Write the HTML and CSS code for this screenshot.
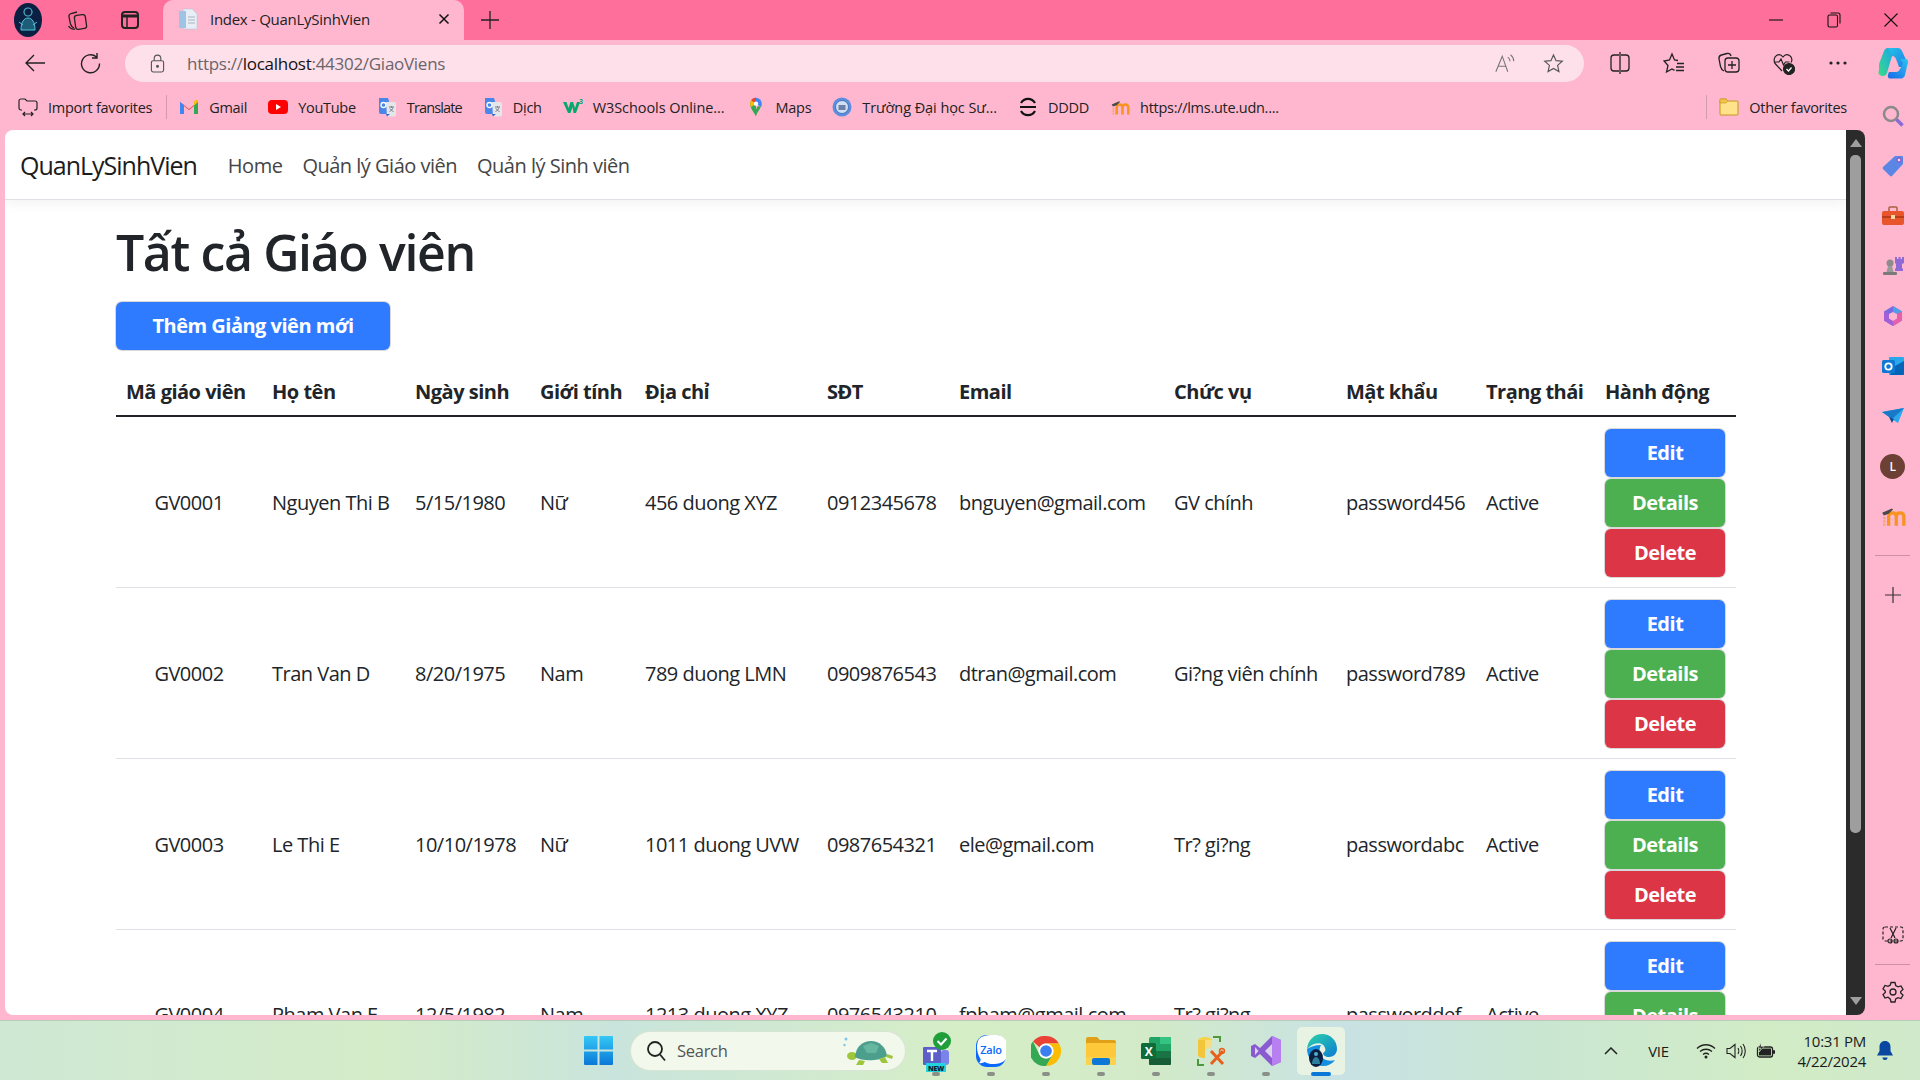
FILE: index.html
```html
<!DOCTYPE html>
<html lang="vi">
<head>
    <meta charset="utf-8">
    <title>Index - QuanLySinhVien</title>
    <link rel="stylesheet" href="styles.css">
</head>
<body>

<svg class="defs" width="0" height="0">
    <symbol id="gtranslate" viewBox="0 0 20 20">
        <path d="M2 1h9l5 16H4a2 2 0 0 1-2-2z" fill="#4a86e8"/>
        <path d="M9 5h8a2 2 0 0 1 2 2v11a1.500 1.500 0 0 1-1.500 1.500H10z" fill="#e4e6ea"/>
        <path d="M9 17l1 2.500 3-2.500z" fill="#3367c8"/>
        <circle cx="6.500" cy="8" r="2.500" fill="none" stroke="#fff" stroke-width="1.300"/>
        <path d="M12 10h5M14.500 9v1.500M16 10.500c-.6 2-1.800 3.200-3.500 4M13 11.500c.6 1.300 1.800 2.400 3.500 3" fill="none" stroke="#6d7380" stroke-width=".9"/>
    </symbol>
    <symbol id="moodle" viewBox="0 0 24 20">
        <path d="M8 19v-8c0-2.500 1.500-4 3.500-4s3.500 1.500 3.500 4v8M15 11c0-2.500 1.500-4 3.500-4S22 8.500 22 11v8" fill="none" stroke="#f7931e" stroke-width="3"/>
        <path d="M4 11V19" fill="none" stroke="#f7931e" stroke-width="2" stroke-dasharray="2 1" opacity=".6"/>
        <path d="M2 7l9-4 1 1-4 4-4.500 1.500z" fill="#4a4a4a"/>
    </symbol>
</svg>

<div class="tabstrip">
    <svg class="avatar" viewBox="0 0 28 34">
        <ellipse cx="14" cy="17" rx="14" ry="17" fill="#0b1f42"/>
        <circle cx="14" cy="9" r="4" fill="none" stroke="#4fb3c8" stroke-width="1.200"/>
        <path d="M7 27c0-8 3-12 7-12s7 4 7 12zM5 19l4 3M23 19l-4 3" fill="#1d5d78" stroke="#54c3d8" stroke-width="1"/>
    </svg>
    <svg class="strip-btn collect" viewBox="0 0 22 22" fill="none" stroke="#222" stroke-width="1.300">
        <rect x="9" y="6" width="11" height="14" rx="2.500" transform="rotate(-8 14 13)"/>
        <path d="M8 19c-2-1-3-2-3.500-4L3 8c-.3-2 .5-3 2-3.500L11 3"/>
        <path d="M9 20c-3 .5-5-.5-6.500-3"/>
    </svg>
    <svg class="strip-btn vtabs" viewBox="0 0 22 22" fill="none" stroke="#222" stroke-width="2">
        <rect x="3" y="3" width="16" height="16" rx="3"/>
        <path d="M3 7h16" stroke-width="3"/>
        <path d="M8 7v12" stroke-width="1.500"/>
    </svg>
    <div class="tab">
        <svg class="favicon" viewBox="0 0 20 22">
            <path d="M5 1h9l5 5v15H5z" fill="#e8eef5" stroke="#b9c8d8" stroke-width=".6"/>
            <rect x="1" y="3" width="7" height="17" fill="#9dc4e4"/>
            <path d="M10 9h7M10 12h7M10 15h7" stroke="#a9b4c0" stroke-width="1"/>
        </svg>
        <span class="tab-title">Index - QuanLySinhVien</span>
        <svg class="tab-close" viewBox="0 0 12 12" fill="none" stroke="#111" stroke-width="1.500"><path d="M1.500 1.500l9 9M10.500 1.500l-9 9"/></svg>
    </div>
    <svg class="new-tab" viewBox="0 0 20 20" fill="none" stroke="#222" stroke-width="1.300"><path d="M10 1v18M1 10h18"/></svg>
    <div class="win-controls">
        <div class="win-btn"><svg width="14" height="14" viewBox="0 0 14 14" stroke="#111" stroke-width="1.100"><path d="M0 7h14"/></svg></div>
        <div class="win-btn"><svg width="14" height="16" viewBox="0 0 14 16" fill="none" stroke="#111" stroke-width="1.100"><rect x="1" y="3" width="9.500" height="12" rx="1.500"/><path d="M3.500 1h7.500a2 2 0 0 1 2 2v8.500"/></svg></div>
        <div class="win-btn"><svg width="14" height="14" viewBox="0 0 14 14" stroke="#111" stroke-width="1.100"><path d="M.5.500l13 13M13.500.500l-13 13"/></svg></div>
    </div>
</div>

<div class="toolbar">
    <svg class="nav-btn" viewBox="0 0 22 22" fill="none" stroke="#222" stroke-width="1.400"><path d="M21 11H2M10 3l-8 8 8 8"/></svg>
    <svg class="nav-btn refresh" viewBox="0 0 22 22" fill="none" stroke="#222" stroke-width="1.400"><path d="M17.500 5a9 9 0 1 0 3 6.500M18 1v5h-5"/></svg>
    <div class="addressbar">
        <svg class="lock" viewBox="0 0 16 20" fill="none" stroke="#555" stroke-width="1.200"><rect x="1.500" y="7" width="13" height="12" rx="2"/><path d="M4.500 7V4.500a3.500 3.500 0 0 1 7 0V7"/><circle cx="8" cy="13" r="1" fill="#555"/></svg>
        <span class="url">https://<b class="url-host">localhost</b>:44302/GiaoViens</span>
        <svg class="read-aloud" viewBox="0 0 24 22" fill="none" stroke="#777" stroke-width="1.200"><path d="M2 20L9 3l6 17M5 14h8M15 4c1.500 1 2.500 2.500 2.500 4.500M18 1.500c2 1.500 3.500 4 3.500 7"/></svg>
        <svg class="star" viewBox="0 0 22 22" fill="none" stroke="#555" stroke-width="1.200"><path d="M11 2l2.700 6 6.500.7-4.900 4.300 1.400 6.500L11 16.200l-5.700 3.300 1.400-6.500L1.800 8.700 8.300 8z"/></svg>
    </div>
    <div class="tool-right">
        <div class="tool-btn"><svg width="20" height="22" viewBox="0 0 20 22" fill="none" stroke="#222" stroke-width="1.300"><path d="M9 3H4a3 3 0 0 0-3 3v10a3 3 0 0 0 3 3h5M11 3h5a3 3 0 0 1 3 3v10a3 3 0 0 1-3 3h-5M10 0v22"/></svg></div>
        <div class="tool-btn"><svg width="22" height="22" viewBox="0 0 22 22" fill="none" stroke="#222" stroke-width="1.300"><path d="M15 8.500L11.500 8 9 2 6.500 8 1 9l4 4.500L3.500 20 9 17l2.500 1.300"/><path d="M14 11.500h7M13 15h8M13 18.500h8" stroke-width="1.500"/></svg></div>
        <div class="tool-btn"><svg width="22" height="24" viewBox="0 0 22 24" fill="none" stroke="#222" stroke-width="1.300"><rect x="7" y="7" width="14" height="14" rx="3"/><path d="M14 10v8M10 14h8"/><path d="M6 20c-2-1-3-2.500-3.500-4.500L1 8c-.3-2 .6-3.500 2.500-4L9 2.500c2-.4 3.500.4 4 2.500"/></svg></div>
        <div class="tool-btn"><svg width="22" height="24" viewBox="0 0 22 24" fill="none" stroke="#222" stroke-width="1.200"><path d="M9 20L2.500 13C.5 11 .5 6.500 3.500 4.500c2.500-1.500 5-.5 6.500 1.500 1.500-2 4-3 6.500-1.500 2.500 1.500 3 5 1.500 7"/><path d="M1.500 11H6l2-3 2.500 6 2-3h4"/><circle cx="16" cy="18" r="5.500" fill="#222"/><path d="M13.500 18l2 2 3-3.500" stroke="#fff"/></svg></div>
        <div class="tool-btn"><svg width="18" height="4" viewBox="0 0 18 4" fill="#222"><circle cx="2" cy="2" r="1.600"/><circle cx="9" cy="2" r="1.600"/><circle cx="16" cy="2" r="1.600"/></svg></div>
        <div class="tool-btn"><svg width="30" height="32" viewBox="0 0 30 32"><defs><linearGradient id="cpA" x1="0" y1="0" x2="1" y2="1"><stop offset="0" stop-color="#26c2e8"/><stop offset="1" stop-color="#1f7fe8"/></linearGradient><linearGradient id="cpB" x1="0" y1="1" x2="1" y2="0"><stop offset="0" stop-color="#3ddc84"/><stop offset="1" stop-color="#17a8e8"/></linearGradient><linearGradient id="cpC" x1="0" y1="1" x2="1" y2="0"><stop offset="0" stop-color="#1a6ae8"/><stop offset="1" stop-color="#2cc4f0"/></linearGradient></defs><path d="M9 1h11c2 0 3 1 4 3l5 11c1 2-.5 5-3 5h-5l-3-8c-1-2-2-3-4-3H9z" fill="url(#cpA)"/><path d="M1 17L6 4c.7-2 2-3 4-3L14 9 9 26c-.5 2-2 3-4 3H4c-3 0-4.500-3-3-6z" fill="url(#cpB)"/><path d="M22 12h6c1.500 0 2 1 2 3l-3 13c-.5 2-2 3.500-4 3.500H12c-2 0-2.500-2-2-4l1-2.500h7c2 0 3-1 4-3l3-6z" fill="url(#cpC)"/></svg></div>
    </div>
</div>

<div class="below">
    <div class="left-col">
        <div class="bookmarks">
            <div class="bm">
                <svg class="bm-ico" viewBox="0 0 20 20" fill="none" stroke="#222" stroke-width="1.200"><path d="M4 13H3a2 2 0 0 1-2-2V4a2 2 0 0 1 2-2h4l2 2h8a2 2 0 0 1 2 2v5a2 2 0 0 1-2 2h-1"/><path d="M5 17h10M7 15l-2 2 2 2M13 15l2 2-2 2"/></svg>
                <span>Import favorites</span>
            </div>
            <i class="bm-sep"></i>
            <div class="bm">
                <svg class="bm-ico" viewBox="0 0 20 16"><path d="M1 15V3l9 7 9-7v12h-4V7l-5 4-5-4v8z" fill="#ea4335"/><path d="M1 15V3l4 3v9z" fill="#4285f4"/><path d="M15 6l4-3v12h-4z" fill="#34a853"/><path d="M15 6.500l4-3.500v-1c0-1-1-1.500-2-1l-2 1.500z" fill="#fbbc04"/></svg>
                <span>Gmail</span>
            </div>
            <div class="bm">
                <svg class="bm-ico" viewBox="0 0 20 16"><rect x="0" y="1" width="20" height="14" rx="4" fill="#f00"/><path d="M8 5l5 3-5 3z" fill="#fff"/></svg>
                <span>YouTube</span>
            </div>
            <div class="bm">
                <svg class="bm-ico"><use href="#gtranslate"/></svg>
                <span class="bm-tight">Translate</span>
            </div>
            <div class="bm">
                <svg class="bm-ico"><use href="#gtranslate"/></svg>
                <span>Dịch</span>
            </div>
            <div class="bm">
                <svg class="bm-ico" viewBox="0 0 20 16"><path d="M0 3h3.500l2 6 2-6h2.500l2 6 2-6h3l-4 11h-2.500L9.500 8l-2 6H5z" fill="#04aa6d"/><text class="bm-w3" x="16" y="5">3</text></svg>
                <span class="bm-wide">W3Schools Online...</span>
            </div>
            <div class="bm">
                <svg class="bm-ico" viewBox="0 0 20 24"><path d="M10 23C7 17 3 14 3 8a7 7 0 0 1 7-7z" fill="#34a853"/><path d="M10 1a7 7 0 0 1 7 7c0 1.500-.5 3-1.200 4L10 8z" fill="#4285f4"/><path d="M4 4a7 7 0 0 1 6-3v7z" fill="#ea4335"/><path d="M3 8c0-1.500.4-3 1-4l6 4-6 4c-.6-1.200-1-2.500-1-4z" fill="#fbbc04"/><path d="M16 11.500C14 16 11.500 18 10 23l-1-6 3-6z" fill="#34a853"/><circle cx="10" cy="8" r="2.600" fill="#fff"/></svg>
                <span>Maps</span>
            </div>
            <div class="bm">
                <svg class="bm-ico" viewBox="0 0 20 20"><circle cx="10" cy="10" r="9.500" fill="#5b8ede"/><circle cx="10" cy="10" r="6.500" fill="#cfe0f5" stroke="#3a62b0" stroke-width=".8"/><path d="M6.500 8h7v5h-7z" fill="#6e7fa8"/></svg>
                <span class="bm-wide">Trường Đại học Sư...</span>
            </div>
            <div class="bm">
                <svg class="bm-ico" viewBox="0 0 20 20" fill="none" stroke="#111" stroke-width="2.200"><path d="M2 10h16M3 6a8 8 0 0 1 14 0M3 14a8 8 0 0 0 14 0"/></svg>
                <span>DDDD</span>
            </div>
            <div class="bm">
                <svg class="bm-ico"><use href="#moodle"/></svg>
                <span>https://lms.ute.udn....</span>
            </div>
            <i class="bm-sep bm-sep-right"></i>
            <div class="bm bm-other">
                <svg class="bm-ico" viewBox="0 0 20 20"><path d="M1 3a1 1 0 0 1 1-1h5l2 2h9a1 1 0 0 1 1 1v12a1 1 0 0 1-1 1H2a1 1 0 0 1-1-1z" fill="#ffe28a" stroke="#c6961a"/><path d="M1 6V3a1 1 0 0 1 1-1h5l2 2-2 2z" fill="#f3c44a" stroke="#c6961a" stroke-width=".6"/></svg>
                <span>Other favorites</span>
            </div>
        </div>

        <div class="viewport">
            <div class="page">
                <nav class="navbar">
                    <a class="brand">QuanLySinhVien</a>
                    <a class="nav-link">Home</a>
                    <a class="nav-link">Quản lý Giáo viên</a>
                    <a class="nav-link">Quản lý Sinh viên</a>
                </nav>
                <main class="container">
                    <h1 class="title">Tất cả Giáo viên</h1>
                    <a class="btn btn-primary btn-add">Thêm Giảng viên mới</a>
                    <table class="table">
                        <colgroup>
                            <col class="c-ma"><col class="c-ten"><col class="c-ngay"><col class="c-gt"><col class="c-dc"><col class="c-sdt"><col class="c-mail"><col class="c-cv"><col class="c-mk"><col class="c-tt"><col class="c-hd">
                        </colgroup>
                        <thead>
                            <tr>
                                <th>Mã giáo viên</th><th>Họ tên</th><th>Ngày sinh</th><th>Giới tính</th><th>Địa chỉ</th><th>SĐT</th><th>Email</th><th>Chức vụ</th><th>Mật khẩu</th><th>Trạng thái</th><th>Hành động</th>
                            </tr>
                        </thead>
                        <tbody>
                            <tr>
                                <td class="center">GV0001</td><td>Nguyen Thi B</td><td>5/15/1980</td><td>Nữ</td><td>456 duong XYZ</td><td>0912345678</td><td>bnguyen@gmail.com</td><td>GV chính</td><td>password456</td><td>Active</td>
                                <td class="actions"><a class="btn btn-primary">Edit</a><a class="btn btn-success">Details</a><a class="btn btn-danger">Delete</a></td>
                            </tr>
                            <tr>
                                <td class="center">GV0002</td><td>Tran Van D</td><td>8/20/1975</td><td>Nam</td><td>789 duong LMN</td><td>0909876543</td><td>dtran@gmail.com</td><td>Gi?ng viên chính</td><td>password789</td><td>Active</td>
                                <td class="actions"><a class="btn btn-primary">Edit</a><a class="btn btn-success">Details</a><a class="btn btn-danger">Delete</a></td>
                            </tr>
                            <tr>
                                <td class="center">GV0003</td><td>Le Thi E</td><td>10/10/1978</td><td>Nữ</td><td>1011 duong UVW</td><td>0987654321</td><td>ele@gmail.com</td><td>Tr? gi?ng</td><td>passwordabc</td><td>Active</td>
                                <td class="actions"><a class="btn btn-primary">Edit</a><a class="btn btn-success">Details</a><a class="btn btn-danger">Delete</a></td>
                            </tr>
                            <tr>
                                <td class="center">GV0004</td><td>Pham Van F</td><td>12/5/1982</td><td>Nam</td><td>1213 duong XYZ</td><td>0976543210</td><td>fpham@gmail.com</td><td>Tr? gi?ng</td><td>passworddef</td><td>Active</td>
                                <td class="actions"><a class="btn btn-primary">Edit</a><a class="btn btn-success">Details</a></td>
                            </tr>
                        </tbody>
                    </table>
                </main>
            </div>
            <div class="scrollbar">
                <i class="arrow-up"></i>
                <div class="thumb"></div>
                <i class="arrow-down"></i>
            </div>
        </div>
    </div>

    <aside class="sidebar">
        <div class="side-btn"><svg width="24" height="24" viewBox="0 0 24 24" fill="none"><circle cx="10" cy="10" r="7" stroke="#8a8a8a" stroke-width="2.500"/><path d="M15.500 15.500l6 6" stroke="#8a6ad8" stroke-width="3.500"/></svg></div>
        <div class="side-btn"><svg width="24" height="24" viewBox="0 0 24 24"><path d="M14 2h7a1 1 0 0 1 1 1v7L11 22a1.500 1.500 0 0 1-2 0l-7-7a1.500 1.500 0 0 1 0-2z" fill="#5b86e5"/><circle cx="18" cy="6" r="2" fill="#f2d9f0" stroke="#8e3fc0"/></svg></div>
        <div class="side-btn"><svg width="24" height="24" viewBox="0 0 24 24"><path d="M8 7V4a1 1 0 0 1 1-1h6a1 1 0 0 1 1 1v3" fill="none" stroke="#a9623f" stroke-width="1.500"/><rect x="1" y="7" width="22" height="14" rx="2" fill="#e8552a"/><rect x="1" y="12" width="22" height="2" fill="#b83c18"/><rect x="10" y="11" width="4" height="4" fill="#f7d9a8"/></svg></div>
        <div class="side-btn"><svg width="24" height="24" viewBox="0 0 24 24"><circle cx="9" cy="9" r="3.500" fill="#8c8c8c"/><path d="M7 12h4l1.500 6h-7z" fill="#9a9a9a"/><rect x="2" y="18" width="14" height="3" rx="1" fill="#7a7a7a"/><path d="M14 3h2v2h1.500V3h2v2H21V3h2v6l-2 1v4l1 1v2h-8v-2l1-1v-4l-1-1z" fill="#8f6ad6"/></svg></div>
        <div class="side-btn"><svg width="24" height="24" viewBox="0 0 24 24"><path d="M12 2l9 5.500v9L12 22l-9-5.500v-9z" fill="#7a6ae0"/><path d="M12 2l9 5.500L16 10l-4-2z" fill="#4f9fe8"/><path d="M21 16.500L12 22v-5l4-2.500V10l5-2.500z" fill="#e85ea8"/><path d="M3 7.500L8 10v4l4 3v5l-9-5.500z" fill="#a45fd8"/><path d="M8 10l4-2 4 2v4.500L12 17l-4-2.500z" fill="#ffb7cf"/></svg></div>
        <div class="side-btn"><svg width="24" height="24" viewBox="0 0 24 24"><rect x="8" y="3" width="15" height="18" rx="1" fill="#28a8ea"/><path d="M14 12l9-5v13a1 1 0 0 1-1 1H9z" fill="#0364b8"/><rect x="1" y="6" width="13" height="13" rx="1.500" fill="#0f78d4"/><circle cx="7.500" cy="12.500" r="3.200" fill="none" stroke="#fff" stroke-width="1.800"/></svg></div>
        <div class="side-btn"><svg width="24" height="24" viewBox="0 0 24 24"><path d="M1 8l22-4-6 15-6-4z" fill="#2aa8ee"/><path d="M1 8l10 7 12-11z" fill="#1879c9"/><path d="M8 13l3 6 2-4z" fill="#0f4c8a"/></svg></div>
        <div class="side-btn"><span class="side-avatar">L</span></div>
        <div class="side-btn"><svg width="26" height="22"><use href="#moodle"/></svg></div>
        <i class="side-sep"></i>
        <div class="side-btn side-plus"><svg width="16" height="16" viewBox="0 0 16 16" stroke="#333" stroke-width="1.200"><path d="M8 0v16M0 8h16"/></svg></div>
        <div class="side-spacer"></div>
        <div class="side-btn side-low"><svg width="22" height="22" viewBox="0 0 22 22" fill="none" stroke="#222" stroke-width="1.200"><rect x="1" y="3" width="20" height="14" rx="2" stroke-dasharray="3 2"/><path d="M8 4l5 10M14 4L9 14"/><circle cx="8" cy="17" r="2"/><circle cx="14" cy="17" r="2"/></svg></div>
        <i class="side-sep side-sep-low"></i>
        <div class="side-btn side-gear"><svg width="22" height="22" viewBox="0 0 22 22" fill="none" stroke="#222" stroke-width="1.300"><path d="M9 1.500h4l.7 3 2.300 1.300 3-.9 2 3.500-2.300 2.100v1.500l2.300 2.100-2 3.500-3-.9-2.300 1.300-.7 3H9l-.7-3L6 16.200l-3 .9-2-3.500 2.300-2.100V10L1 7.900l2-3.500 3 .9 2.300-1.300z"/><circle cx="11" cy="11" r="3"/></svg></div>
    </aside>
</div>

<footer class="taskbar">
    <svg class="start" viewBox="0 0 29 29">
        <defs><linearGradient id="winG" x1="0" y1="0" x2="0" y2="1"><stop offset="0" stop-color="#35c8f6"/><stop offset="1" stop-color="#0a78d8"/></linearGradient></defs>
        <path d="M0 1a1 1 0 0 1 1-1h12.500v13.500H0zM15.500 0H28a1 1 0 0 1 1 1v12.500H15.500zM0 15.500h13.500V29H1a1 1 0 0 1-1-1zM15.500 15.500H29V28a1 1 0 0 1-1 1H15.500z" fill="url(#winG)"/>
    </svg>
    <div class="searchbox">
        <svg class="search-ico" viewBox="0 0 20 22" fill="none" stroke="#222" stroke-width="1.800"><circle cx="9" cy="9" r="7"/><path d="M14 14.500l5 6"/></svg>
        <span class="search-text">Search</span>
        <svg class="turtle" viewBox="0 0 52 30">
            <circle cx="3" cy="3" r="1.500" fill="#7cc6e8"/><circle cx="1.500" cy="9" r="1.200" fill="#7cc6e8"/>
            <ellipse cx="9" cy="20" rx="5" ry="4" fill="#9dc63c"/>
            <path d="M12 21c1-11 8-16 16-16s15 6 16 15c-8 5-24 6-32 1z" fill="#4d9f8d"/>
            <path d="M20 10l8-3 8 3-3 7H24z" fill="#66b7a0"/>
            <path d="M16 24l-3 5h7l2-4zM36 23l3 4h6l-3-6zM44 18l6 2-1 3-6-2z" fill="#9dc63c"/>
        </svg>
    </div>
    <div class="task-apps">
        <div class="app">
            <svg width="34" height="42" viewBox="-3 0 34 42"><rect x="1" y="17" width="18" height="18" rx="1" fill="#5b5fc7"/><path d="M5 21h10M10 21v10" stroke="#fff" stroke-width="2.400"/><rect x="19" y="20" width="8" height="15" rx="3" fill="#7b83eb"/><circle cx="20" cy="11" r="9" fill="#1f9e3a"/><path d="M15.500 11l3.500 3.500 5.500-6" fill="none" stroke="#fff" stroke-width="2"/><rect x="4" y="33" width="20" height="9" fill="#22d3e0"/><text class="new-badge" x="14" y="40.500">NEW</text></svg>
            <i class="dot"></i>
        </div>
        <div class="app">
            <svg width="30" height="32" viewBox="0 0 30 32"><rect x="0" y="0" width="30" height="32" rx="11" fill="#0a68ff"/><path d="M3 4c3-3 7-4 12-4h5c4 0 8 2 10 6v18c-3 4-8 5-13 5-3 0-6-.5-8-2-2 1-4 1.500-6 1 1-1 2-2.500 1.500-4C2 20 1 16 1 12c0-3 .7-6 2-8z" fill="#fff"/><text class="zalo-t" x="15" y="19">Zalo</text></svg>
            <i class="dot"></i>
        </div>
        <div class="app">
            <svg width="30" height="30" viewBox="0 0 30 30"><path d="M15 0a15 15 0 0 1 13 7.500H15a7.500 7.500 0 0 0-6.500 3.800L2 5.500A15 15 0 0 1 15 0z" fill="#ea4335"/><path d="M28 7.500A15 15 0 0 1 15 30l6.500-11.200A7.500 7.500 0 0 0 21.500 11 7.500 7.500 0 0 0 15 7.500z" fill="#fbbc04"/><path d="M2 5.500L8.500 18.800A7.500 7.500 0 0 0 21.500 18.800L15 30A15 15 0 0 1 2 5.500z" fill="#34a853"/><circle cx="15" cy="15" r="7.500" fill="#fff"/><circle cx="15" cy="15" r="5.800" fill="#3a7ff0"/></svg>
            <i class="dot"></i>
        </div>
        <div class="app">
            <svg width="30" height="28" viewBox="0 0 30 28"><path d="M0 2a2 2 0 0 1 2-2h9l3 3h14a2 2 0 0 1 2 2v4H0z" fill="#e0a118"/><rect x="0" y="6" width="30" height="22" rx="1" fill="#fdc93a"/><path d="M0 20h30v8H0z" fill="#fbd24e"/><rect x="6" y="21" width="18" height="7" rx="2" fill="#0d79d6"/></svg>
            <i class="dot"></i>
        </div>
        <div class="app">
            <svg width="30" height="28" viewBox="0 0 30 28"><rect x="8" y="0" width="22" height="28" rx="2" fill="#21a366"/><rect x="19" y="0" width="11" height="7" fill="#33c481"/><rect x="8" y="14" width="11" height="7" fill="#107c41"/><rect x="19" y="14" width="11" height="7" fill="#185c37" opacity=".7"/><rect x="8" y="21" width="22" height="7" rx="1" fill="#185c37"/><rect x="0" y="6" width="15" height="16" rx="1.500" fill="#0e6b3a"/><text class="excel-t" x="7.500" y="19">X</text></svg>
            <i class="dot"></i>
        </div>
        <div class="app">
            <svg width="28" height="30" viewBox="0 0 28 30" fill="none"><path d="M16 1h7v5M1 23v6h6" stroke="#4e9a3a" stroke-width="2"/><ellipse cx="8" cy="4" rx="7" ry="3" fill="#f7d24b"/><path d="M1 4v15c0 2 3 3 7 3V4z" fill="#f2c53a"/><path d="M15 4v6l-7 4V4z" fill="#f7dd7c"/><path d="M14 28l12-13M14 15l12 13" stroke="#e8601c" stroke-width="3"/><circle cx="25" cy="15" r="2.500" stroke="#e8601c" stroke-width="1.500"/></svg>
            <i class="dot"></i>
        </div>
        <div class="app">
            <svg width="30" height="30" viewBox="0 0 30 30"><path d="M21 0l9 4v22l-9 4L9 18l-5 4-4-2V10l4-2 5 4z" fill="#8a5bd0"/><path d="M21 0l9 4v22l-9 4z" fill="#b77ff0"/><path d="M21 8v14l-7-7z" fill="#d9d4ea"/><path d="M4 11v8l3.500-4z" fill="#d9d4ea"/></svg>
            <i class="dot"></i>
        </div>
        <div class="app app-active">
            <svg width="32" height="34" viewBox="0 0 32 34"><defs><linearGradient id="edgeG" x1="0" y1="0" x2="1" y2="1"><stop offset="0" stop-color="#2cd4a8"/><stop offset="1" stop-color="#0c7cd5"/></linearGradient></defs><path d="M2 15C3 6 9 0 17 0c8 0 15 6 15 15 0 5-4 8-8 8s-6-2-6-4c2-1 3-3 2-5-1-4-6-6-11-4-3 1-5 3-7 5z" fill="url(#edgeG)"/><path d="M2 15c0 9 7 17 16 17 5 0 9-2 12-6-3 1-8 1-11-1-4-3-6-8-3-14-6 0-11 2-14 4z" fill="#1590e0"/><ellipse cx="11" cy="24" rx="7" ry="9" fill="#0b1f42"/><circle cx="11" cy="20" r="2" fill="#4fb3c8"/><path d="M7 30c0-4 2-7 4-7s4 3 4 7z" fill="#2d7f9c"/></svg>
            <i class="dot dot-active"></i>
        </div>
    </div>
    <div class="tray">
        <div class="tray-box"><svg width="14" height="8" viewBox="0 0 14 8" fill="none" stroke="#222" stroke-width="1.500"><path d="M1 7l6-6 6 6"/></svg></div>
        <div class="tray-lang">VIE</div>
        <div class="tray-box"><svg width="20" height="16" viewBox="0 0 20 16" fill="none" stroke="#222" stroke-width="1.300"><path d="M1 5.500c5-5 13-5 18 0M4 8.500c3.500-3 8.500-3 12 0M7 11.500c1.800-1.500 4.200-1.500 6 0"/><circle cx="10" cy="14" r="1.500" fill="#222" stroke="none"/></svg></div>
        <div class="tray-box"><svg width="20" height="16" viewBox="0 0 20 16" fill="none" stroke="#222" stroke-width="1.100"><path d="M1 5.500h3L9 1.500v13L4 10.500H1zM12 5c1 1.500 1 4.500 0 6M14.500 3c2 3 2 7 0 10M17 1c3 4 3 10 0 14"/></svg></div>
        <div class="tray-box"><svg width="20" height="16" viewBox="0 0 20 16"><rect x="1.500" y="4" width="15" height="10" rx="2" fill="none" stroke="#222" stroke-width="1.300"/><rect x="3" y="5.500" width="12" height="7" fill="#222"/><rect x="17" y="7" width="2" height="4" rx="1" fill="#222"/><path d="M5 0L2 5h3l-2 4 5-5.500H5z" fill="#222" stroke="#d0e8cc" stroke-width=".6"/></svg></div>
        <div class="clock"><span>10:31 PM</span><span>4/22/2024</span></div>
        <div class="tray-bell"><svg width="16" height="20" viewBox="0 0 16 20" fill="#0a47a0"><path d="M8 0c3.500 0 5.500 2.500 5.500 6v4l2.500 4.500H0L2.500 10V6C2.500 2.500 4.500 0 8 0z"/><path d="M5.500 16.500h5a2.500 2.500 0 0 1-5 0z"/></svg></div>
    </div>
</footer>

</body>
</html>
```

FILE: styles.css
```css
* {
    box-sizing: border-box;
}

html, body {
    margin: 0;
    height: 100%;
    overflow: hidden;
}

body {
    display: flex;
    flex-direction: column;
    width: 1920px;
    height: 1080px;
    background: #feb7cf;
    color: #212529;
    font: 14px "Open Sans", "Noto Sans", sans-serif;
    letter-spacing: -0.02em;
}

.defs {
    position: absolute;
}

/* tab strip */
.tabstrip {
    display: flex;
    align-items: center;
    height: 40px;
    padding-left: 14px;
    background: #ff6f9c;
}

.avatar {
    width: 28px;
    height: 34px;
    margin-right: 24px;
}

.strip-btn {
    width: 22px;
    height: 22px;
}

.collect {
    margin-right: 31px;
}

.vtabs {
    margin-right: 22px;
}

.tab {
    display: flex;
    align-items: center;
    align-self: stretch;
    width: 301px;
    padding: 0 14px 2px 15px;
    background: #feb7cf;
    border-radius: 10px 10px 0 0;
}

.favicon {
    width: 20px;
    height: 22px;
    margin-right: 12px;
}

.tab-title {
    flex: 1;
    font-size: 15px;
    color: #222;
}

.tab-close {
    width: 12px;
    height: 12px;
}

.new-tab {
    width: 20px;
    height: 20px;
    margin-left: 16px;
}

.win-controls {
    display: flex;
    margin-left: auto;
}

.win-btn {
    display: flex;
    align-items: center;
    justify-content: center;
    width: 57.5px;
    height: 40px;
}

/* toolbar */
.toolbar {
    display: flex;
    align-items: center;
    height: 46px;
    padding: 0 0 0 24px;
}

.nav-btn {
    width: 22px;
    height: 22px;
    margin-right: 33px;
}

.refresh {
    margin-right: 24px;
}

.addressbar {
    flex: 1;
    display: flex;
    align-items: center;
    height: 37px;
    margin-right: 8px;
    padding: 0 20px 0 25px;
    background: #fee0ea;
    border-radius: 19px;
}

.lock {
    width: 15px;
    height: 19px;
    margin-right: 22px;
}

.url {
    flex: 1;
    font-size: 17px;
    color: #6b6468;
}

.url-host {
    font-weight: 400;
    color: #111;
}

.read-aloud {
    width: 22px;
    height: 21px;
    margin-right: 27px;
}

.star {
    width: 21px;
    height: 21px;
}

.tool-right {
    display: flex;
}

.tool-btn {
    display: flex;
    align-items: center;
    justify-content: center;
    width: 54.6px;
    height: 46px;
}

/* below the toolbar: favorites + page on the left, edge sidebar on the right */
.below {
    display: flex;
    height: 934px;
}

.left-col {
    flex: 1;
    display: flex;
    flex-direction: column;
    min-width: 0;
    padding-bottom: 5px;
}

.bookmarks {
    display: flex;
    align-items: center;
    flex: none;
    gap: 21px;
    height: 44px;
    padding: 0 0 2px 18px;
    color: #222;
    font-size: 14.5px;
}

.bm {
    display: flex;
    align-items: center;
    gap: 10px;
    white-space: nowrap;
}

.bm-tight {
    letter-spacing: -0.06em;
}

.bm-wide {
    letter-spacing: -0.005em;
}

.bm-ico {
    width: 20px;
    height: 20px;
}

.bm-w3 {
    font-size: 7px;
    font-weight: 700;
    fill: #04aa6d;
}

.bm-sep {
    width: 1px;
    height: 24px;
    margin: 0 -9px 0 -7px;
    background: #d29ab0;
}

.bm-sep-right {
    margin: 0 0 0 auto;
}

.bm-other {
    margin-left: -9px;
    padding-right: 18px;
}

.viewport {
    flex: 1;
    display: flex;
    min-height: 0;
    padding-left: 5px;
}

.page {
    flex: 1;
    min-width: 0;
    overflow: hidden;
    background: #fff;
    border-radius: 8px 0 0 8px;
    font-size: 20px;
    letter-spacing: -0.025em;
}

.navbar {
    display: flex;
    align-items: center;
    height: 70px;
    padding-left: 15px;
    border-bottom: 1px solid #dee2e6;
    box-shadow: 0 4px 12px rgba(0, 0, 0, .05);
}

.brand {
    margin-right: 31px;
    font-size: 25px;
    letter-spacing: -0.04em;
    color: #1c1c1c;
}

.nav-link {
    margin-right: 20px;
    padding-top: 2px;
    color: #454545;
}

.container {
    padding: 22px 110px 0 111px;
}

.title {
    margin: 0 0 20px;
    font-size: 50px;
    line-height: 60px;
    font-weight: 600;
    letter-spacing: -0.0275em;
}

.btn {
    display: block;
    width: 120px;
    height: 48px;
    margin-bottom: 2px;
    border-radius: 6px;
    color: #fff;
    font-weight: 700;
    line-height: 48px;
    text-align: center;
    box-shadow: 0 0 0 1px #d8d8d8;
}

.btn-primary {
    background: #2f7bff;
}

.btn-success {
    background: #4caf50;
}

.btn-danger {
    background: #dc3545;
}

.btn-add {
    width: 274px;
    margin-bottom: 16px;
}

.table {
    width: 1620px;
    table-layout: fixed;
    border-collapse: collapse;
}

.c-ma { width: 146px; }
.c-ten { width: 143px; }
.c-ngay { width: 125px; }
.c-gt { width: 105px; }
.c-dc { width: 182px; }
.c-sdt { width: 132px; }
.c-mail { width: 215px; }
.c-cv { width: 172px; }
.c-mk { width: 140px; }
.c-tt { width: 119px; }
.c-hd { width: 141px; }

.table th {
    height: 50px;
    padding: 11px 10px 9px;
    border-bottom: 2px solid #212529;
    font-weight: 700;
    text-align: left;
    white-space: nowrap;
}

.table td {
    height: 170px;
    padding: 11px 10px;
    border-bottom: 1px solid #dee2e6;
    vertical-align: middle;
    white-space: nowrap;
}

.table td.center {
    text-align: center;
}

.table td.actions {
    padding: 12px 10px 8px;
    vertical-align: top;
}

/* scrollbar, dark theme */
.scrollbar {
    flex: none;
    display: flex;
    flex-direction: column;
    align-items: center;
    width: 19px;
    padding: 9px 0 10px;
    background: #2b2b2b;
    border-radius: 0 8px 8px 0;
}

.thumb {
    flex: none;
    width: 11px;
    height: 678px;
    margin-top: 8px;
    background: #9e9e9e;
    border-radius: 5px;
}

.arrow-up {
    width: 0;
    height: 0;
    border: 6px solid transparent;
    border-top: 0;
    border-bottom: 8px solid #9e9e9e;
}

.arrow-down {
    width: 0;
    height: 0;
    margin-top: auto;
    border: 6px solid transparent;
    border-bottom: 0;
    border-top: 8px solid #9e9e9e;
}

/* edge sidebar */
.sidebar {
    flex: none;
    display: flex;
    flex-direction: column;
    align-items: center;
    width: 55px;
    padding: 5px 0 3px;
}

.side-btn {
    flex: none;
    display: flex;
    align-items: center;
    justify-content: center;
    height: 50px;
}

.side-avatar {
    width: 25px;
    height: 25px;
    border-radius: 50%;
    background: #6d4035;
    color: #fff;
    font-size: 12px;
    font-weight: 600;
    line-height: 25px;
    text-align: center;
}

.side-sep {
    flex: none;
    width: 35px;
    height: 1px;
    margin-top: 14px;
    background: #c990a6;
}

.side-plus {
    margin-top: 14px;
}

.side-spacer {
    flex: 1;
}

.side-sep-low {
    margin-top: 4px;
}

.side-gear {
    margin-top: 2px;
}

/* taskbar */
.taskbar {
    flex: none;
    display: flex;
    align-items: center;
    height: 60px;
    padding-left: 584px;
    border-top: 1px solid #b8cdb8;
    background: linear-gradient(90deg, #cfe8d4 0, #d4ecc8 20%, #c9e4dc 32%, #d6eec6 50%, #d2eac8 60%, #c8e2e4 70%, #c9e6d2 80%, #d2ecc6 92%, #cfe9ca 100%);
}

.start {
    width: 29px;
    height: 29px;
    margin-right: 18px;
}

.searchbox {
    display: flex;
    align-items: center;
    width: 274px;
    height: 38px;
    padding: 0 10px 0 15px;
    background: #f2f8ec;
    border-radius: 19px;
    box-shadow: 0 0 0 1px #d8e4d4;
}

.search-ico {
    width: 20px;
    height: 22px;
    margin-right: 11px;
}

.search-text {
    flex: 1;
    font-size: 16.5px;
    color: #555;
}

.turtle {
    width: 52px;
    height: 30px;
}

.task-apps {
    display: flex;
    margin-left: 3px;
}

.app {
    position: relative;
    display: flex;
    align-items: center;
    justify-content: center;
    width: 55px;
    height: 48px;
}

.app-active {
    width: 48px;
    margin: 0 3.5px;
    background: #e8f3e4;
    border-radius: 5px;
}

.dot {
    position: absolute;
    left: 24px;
    bottom: -1px;
    width: 8px;
    height: 4px;
    border-radius: 2px;
    background: #8a9088;
}

.dot-active {
    left: 14px;
    width: 20px;
    background: #0a78d8;
}

.new-badge {
    font-size: 7px;
    font-weight: 800;
    text-anchor: middle;
    fill: #123;
}

.zalo-t {
    font-size: 11px;
    font-weight: 600;
    text-anchor: middle;
    fill: #0a68ff;
}

.excel-t {
    font-size: 12px;
    font-weight: 700;
    text-anchor: middle;
    fill: #fff;
}

.tray {
    display: flex;
    align-items: center;
    margin-left: auto;
    padding-right: 16px;
    color: #1a1a1a;
    font-size: 15px;
}

.tray-box {
    display: flex;
    align-items: center;
    justify-content: center;
    width: 30px;
}

.tray-lang {
    width: 65px;
    text-align: center;
}

.clock {
    display: flex;
    flex-direction: column;
    width: 85px;
    line-height: 20px;
    text-align: right;
}

.tray-bell {
    display: flex;
    justify-content: center;
    width: 38px;
}
```
